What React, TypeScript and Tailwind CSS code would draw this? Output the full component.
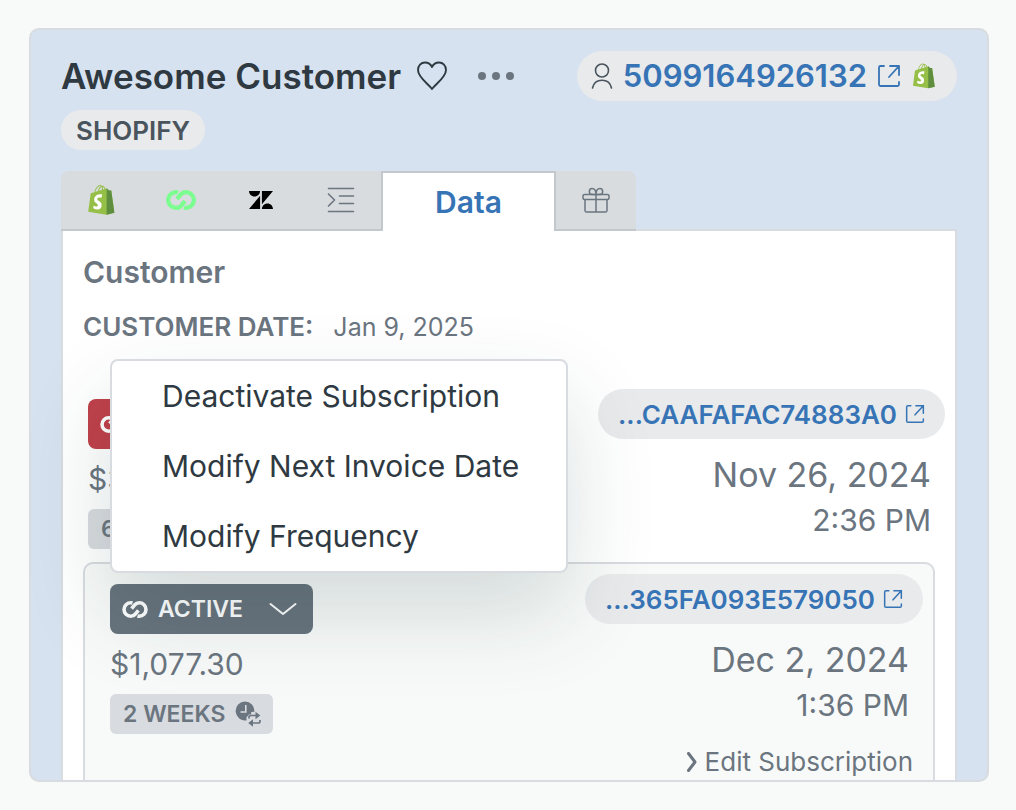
import type { ReactNode } from "react";
import { SiZendesk } from "react-icons/si";

interface IconProps {
  className?: string;
}

function ShopifyIcon({ className }: IconProps) {
  return (
    <svg viewBox="0 0 110 125" className={className} aria-hidden="true">
      <path
        fill="#95bf47"
        d="M95.9,23.9c-0.1-0.6-0.6-1-1.1-1c-0.5,0-9.3-0.2-9.3-0.2s-7.4-7.2-8.1-7.9c-0.7-0.7-2.2-0.5-2.7-0.3c0,0-1.4,0.4-3.7,1.1c-0.4-1.3-1-2.8-1.8-4.4c-2.6-5-6.5-7.7-11.1-7.7c-0.3,0-0.6,0-1,0.1c-0.1-0.2-0.3-0.3-0.4-0.5c-2-2.2-4.6-3.2-7.7-3.1c-6,0.2-12,4.5-16.8,12.2c-3.4,5.4-6,12.2-6.7,17.5c-6.9,2.1-11.7,3.6-11.8,3.7c-3.5,1.1-3.6,1.2-4,4.5c-0.3,2.5-9.5,73.2-9.5,73.2l75.6,13.1l32.8-8.1C109.6,115.8,96,24.5,95.9,23.9z M67.2,16.8c-1.7,0.5-3.7,1.1-5.9,1.8c0-3-0.4-7.3-1.8-10.9C64,8.6,66.2,13.7,67.2,16.8z M57.2,19.9c-4,1.2-8.4,2.6-12.8,3.9c1.2-4.7,3.6-9.4,6.4-12.5c1.1-1.1,2.6-2.4,4.3-3.2C56.9,11.6,57.3,16.5,57.2,19.9z M49.1,4c1.4,0,2.6,0.3,3.6,0.9c-1.6,0.8-3.2,2.1-4.7,3.6c-3.8,4.1-6.7,10.5-7.9,16.6c-3.6,1.1-7.2,2.2-10.5,3.2C31.7,18.8,39.8,4.3,49.1,4z"
      />
      <path
        fill="#5e8e3e"
        d="M94.8,22.9c-0.5,0-9.3-0.2-9.3-0.2s-7.4-7.2-8.1-7.9c-0.3-0.3-0.6-0.4-1-0.5l0,109.7l32.8-8.1c0,0-13.4-90.9-13.5-91.5C95.8,23.3,95.3,22.9,94.8,22.9z"
      />
      <path
        fill="#fff"
        d="M58,39.9l-3.8,14.3c0,0-4.3-2-9.4-1.6c-7.5,0.5-7.5,5.2-7.5,6.4c0.4,6.4,17.3,7.8,18.3,22.9c0.7,11.9-6.3,20-16.4,20.6c-12.2,0.8-18.9-6.4-18.9-6.4l2.6-11c0,0,6.7,5.1,12.1,4.7c3.5-0.2,4.8-3.1,4.7-5.1c-0.5-8.4-14.3-7.9-15.2-21.7C23.8,51.4,31.5,40.1,48.5,39C55,38.6,58,39.9,58,39.9z"
      />
    </svg>
  );
}

function LoopIcon({ className }: IconProps) {
  return (
    <svg
      viewBox="0 0 30 20"
      fill="none"
      stroke="currentColor"
      strokeWidth="4.2"
      className={className}
      aria-hidden="true"
    >
      <path d="M12 2.3C11.400 2.100 10.700 2.100 10 2.100a7.900 7.900 0 0 0 0 15.800c2.500 0 4-.8 5.500-2.600L19 11" />
      <path d="M18 17.700C18.600 17.900 19.300 17.900 20 17.900a7.900 7.900 0 0 0 0-15.800c-2.500 0-4 .8-5.500 2.600L11 9" />
    </svg>
  );
}

function ExternalIcon({ className }: IconProps) {
  return (
    <svg
      viewBox="0 0 24 24"
      fill="none"
      stroke="currentColor"
      strokeWidth="1.8"
      strokeLinecap="round"
      strokeLinejoin="round"
      className={className}
      aria-hidden="true"
    >
      <path d="M7 2H3.5A1.5 1.5 0 0 0 2 3.5v17A1.5 1.5 0 0 0 3.500 22h17a1.5 1.5 0 0 0 1.500-1.500V18M13 2h9v9M22 2 12 13" />
    </svg>
  );
}

function PersonIcon({ className }: IconProps) {
  return (
    <svg
      viewBox="0 0 22 26"
      fill="none"
      stroke="currentColor"
      strokeWidth="1.6"
      strokeLinecap="round"
      className={className}
      aria-hidden="true"
    >
      <circle cx="11" cy="7.5" r="6.5" />
      <path d="M1.5 25c1-4.800 4.500-7.800 9.500-7.800s8.500 3 9.500 7.800" />
    </svg>
  );
}

function HeartIcon({ className }: IconProps) {
  return (
    <svg
      viewBox="0 0 32 30"
      fill="none"
      stroke="currentColor"
      strokeWidth="1.9"
      strokeLinejoin="round"
      className={className}
      aria-hidden="true"
    >
      <path d="M16 28C12.500 23 2 16.500 2 9c0-4.500 3-7.500 7-7.500 3.500 0 5.800 2 7 4.500 1.200-2.500 3.500-4.500 7-4.500 4 0 7 3 7 7.500 0 7.500-10.500 14-14 19z" />
    </svg>
  );
}

function IndentIcon({ className }: IconProps) {
  return (
    <svg
      viewBox="0 0 28 26"
      fill="none"
      stroke="currentColor"
      strokeWidth="1.6"
      strokeLinecap="round"
      strokeLinejoin="round"
      className={className}
      aria-hidden="true"
    >
      <path d="M1.5 1.500h25M12.500 9h14M12.500 16.500h14M1.500 24.500h25M1.500 7l6 6-6 6" />
    </svg>
  );
}

function GiftIcon({ className }: IconProps) {
  return (
    <svg
      viewBox="0 0 28 26"
      fill="none"
      stroke="currentColor"
      strokeWidth="1.5"
      strokeLinejoin="round"
      className={className}
      aria-hidden="true"
    >
      <rect x="1" y="7.5" width="26" height="5" rx="1.5" />
      <path d="M3 12.500V23.500a1.500 1.500 0 0 0 1.500 1.500h19a1.500 1.500 0 0 0 1.500-1.500V12.500M14 7.500V25M14 7.500H10C6.500 7.500 6.500 1.500 10 1.500c2.500 0 4 2.500 4 6zM14 7.500H18c3.500 0 3.500-6 0-6-2.500 0-4 2.500-4 6z" />
    </svg>
  );
}

function FrequencyIcon({ className }: IconProps) {
  return (
    <svg viewBox="0 0 26 26" fill="none" className={className} aria-hidden="true">
      <path
        fill="currentColor"
        d="M10 .5a9.500 9.500 0 1 0 1.500 18.900v-3.200l2.500-2.700h2l.3-2.500 3.100-.3A9.500 9.500 0 0 0 10 .5z"
      />
      <path stroke="#d8dbdf" strokeWidth="1.6" d="M10.800 4v7H5.500" />
      <g stroke="currentColor" strokeWidth="1.7">
        <path d="M14 17.500v-1.300c0-1 .8-1.700 1.700-1.700h6M25 19v1.300c0 1-.8 1.700-1.700 1.700h-6" />
      </g>
      <path fill="currentColor" d="M20.500 10.800l4.800 3.700-4.800 3.700zM18 18.300v7.400L13.200 22z" />
    </svg>
  );
}

function ChevronDown({ className }: IconProps) {
  return (
    <svg
      viewBox="0 0 28 14"
      fill="none"
      stroke="currentColor"
      strokeWidth="2"
      strokeLinecap="round"
      strokeLinejoin="round"
      className={className}
      aria-hidden="true"
    >
      <path d="M1.5 2 14 12 26.500 2" />
    </svg>
  );
}

interface TabProps {
  label: string;
  children: ReactNode;
}

function Tab({ label, children }: TabProps) {
  return (
    <button
      type="button"
      role="tab"
      aria-selected="false"
      aria-label={label}
      className="flex w-20 items-center justify-center text-[#6b757f]"
    >
      {children}
    </button>
  );
}

function IdLink({ id }: { id: string }) {
  return (
    <a
      href="#subscription"
      className="flex h-[50px] items-center gap-2 rounded-full bg-[#e9eaec] px-5 text-[26px] font-semibold text-[#3774b5]"
    >
      {id}
      <ExternalIcon className="size-5" />
    </a>
  );
}

interface SubscriptionProps {
  id: string;
  date: string;
  time: string;
  status: ReactNode;
  price: string;
  frequency: string;
}

function Subscription({ id, date, time, status, price, frequency }: SubscriptionProps) {
  return (
    <div className="flex justify-between">
      <div className="flex flex-col items-start pt-[10px]">
        {status}
        <div className="flex h-[60px] items-center text-[30px]">{price}</div>
        <div className="flex h-10 items-center gap-[10px] rounded-md bg-[#d8dbdf] pr-3 pl-[13px] text-[23px] font-semibold">
          {frequency}
          <FrequencyIcon className="size-[26px]" />
        </div>
      </div>
      <div className="flex flex-col items-end">
        <IdLink id={id} />
        <div className="mt-3 pr-[14px] text-right">
          <div className="text-[34px] leading-[48px]">{date}</div>
          <div className="text-[30px] leading-[42px]">{time}</div>
        </div>
      </div>
    </div>
  );
}

const menuItems = [
  "Deactivate Subscription",
  "Modify Next Invoice Date",
  "Modify Frequency",
];

export default function App() {
  return (
    <div className="flex h-screen bg-[#f8faf9] py-[28px] pr-[27px] pl-[29px] font-[Inter,sans-serif] text-[#6b757f]">
      <main className="flex flex-1 flex-col overflow-hidden rounded-[10px] border-2 border-[#d8dbdf] bg-[#d7e2f0] px-[30px] pt-[21px]">
        <header className="flex items-start justify-between">
          <div>
            <div className="flex h-[50px] items-center">
              <h1 className="text-[35px] font-semibold text-[#2f3941]">Awesome Customer</h1>
              <button type="button" aria-label="Favorite" className="ml-[15px] text-[#2f3941]">
                <HeartIcon className="h-[30px] w-8" />
              </button>
              <button type="button" aria-label="More" className="ml-[30px] flex gap-[6px]">
                <span className="size-2 rounded-full bg-[#6b757f]" />
                <span className="size-2 rounded-full bg-[#6b757f]" />
                <span className="size-2 rounded-full bg-[#6b757f]" />
              </button>
            </div>
            <span className="mt-[9px] flex h-10 w-fit items-center rounded-full bg-[#e9eaec] px-[15px] text-[26px] font-semibold text-[#49545c]">
              SHOPIFY
            </span>
          </div>
          <a
            href="#customer"
            className="flex h-[50px] items-center rounded-full bg-[#e9eaec] pr-[22px] pl-[14px] text-[31px] font-semibold text-[#3774b5]"
          >
            <PersonIcon className="mr-[10px] h-[26px] w-[22px] text-[#49545c]" />
            5099164926132
            <ExternalIcon className="mr-3 ml-[10px] size-6" />
            <ShopifyIcon className="h-[26px] w-[22px]" />
          </a>
        </header>

        <div role="tablist" className="relative z-10 mt-[21px] -mb-[2px] flex h-[60px] shrink-0">
          <div className="flex rounded-tl-lg border-b-2 border-[#c2c8cc] bg-[#d8dcde]">
            <Tab label="Shopify">
              <ShopifyIcon className="h-[30px] w-[27px]" />
            </Tab>
            <Tab label="Loop">
              <LoopIcon className="h-5 w-[30px] text-[#7bfd8f]" />
            </Tab>
            <Tab label="Zendesk">
              <SiZendesk className="size-6 text-black" />
            </Tab>
            <Tab label="Timeline">
              <IndentIcon className="h-[26px] w-7" />
            </Tab>
          </div>
          <button
            type="button"
            role="tab"
            aria-selected="true"
            className="w-[175px] border-x-2 border-t-2 border-[#c2c8cc] bg-white text-[30px] font-semibold text-[#3774b5]"
          >
            Data
          </button>
          <div className="flex rounded-tr-lg border-b-2 border-[#c2c8cc] bg-[#d8dcde]">
            <Tab label="Gifts">
              <GiftIcon className="h-[26px] w-7" />
            </Tab>
          </div>
        </div>

        <section className="relative min-h-0 flex-1 border-2 border-b-0 border-[#d8dbdf] bg-white px-5 pt-5">
          <h2 className="text-[30px] leading-[42px] font-semibold">Customer</h2>
          <p className="mt-[15px] flex items-baseline gap-5 text-[25px] leading-[38px]">
            <span className="text-[26px] font-semibold">CUSTOMER DATE:</span>
            <span>Jan 9, 2025</span>
          </p>

          <div className="relative mt-[43px]">
            <div className="-mr-[10px] pl-[5px]">
              <Subscription
                id="...CAAFAFAC74883A0"
                date="Nov 26, 2024"
                time="2:36 PM"
                price="$3,077.30"
                frequency="6 WEEKS"
                status={
                  <span className="flex h-[50px] items-center gap-[10px] rounded-lg bg-[#c0404a] px-3 text-[23px] font-semibold text-white">
                    <LoopIcon className="h-[17px] w-[26px]" />
                    CANCELLED
                  </span>
                }
              />
            </div>

            <div className="mt-[13px] h-[300px] rounded-t-[10px] border-2 border-[#d8dbdf] bg-[#f8faf9] pt-[10px] pr-[10px] pl-[25px]">
              <Subscription
                id="...365FA093E579050"
                date="Dec 2, 2024"
                time="1:36 PM"
                price="$1,077.30"
                frequency="2 WEEKS"
                status={
                  <button
                    type="button"
                    aria-expanded="true"
                    className="flex h-[50px] items-center rounded-lg bg-[#68737d] pr-4 pl-3 text-[23px] font-semibold text-white"
                  >
                    <LoopIcon className="mr-[10px] h-[17px] w-[26px]" />
                    ACTIVE
                    <ChevronDown className="ml-[26px] h-[14px] w-7" />
                  </button>
                }
              />
              <div className="mt-[10px] flex justify-end pr-[10px]">
                <a href="#edit" className="flex items-center gap-2 text-[26px] leading-[36px]">
                  <svg viewBox="0 0 10 20" className="h-5 w-[10px]" fill="none" aria-hidden="true">
                    <path
                      d="M1.5 1.500 8 10l-6.500 8.500"
                      stroke="currentColor"
                      strokeWidth="3"
                      strokeLinecap="round"
                      strokeLinejoin="round"
                    />
                  </svg>
                  Edit Subscription
                </a>
              </div>
            </div>

            <div
              role="menu"
              className="absolute -top-[30px] left-[27px] w-[458px] rounded-lg border-2 border-[#d8dbdf] bg-white shadow-[0_40px_88px_rgba(23,60,64,0.16)]"
            >
              {menuItems.map((item) => (
                <button
                  key={item}
                  type="button"
                  role="menuitem"
                  className="block h-[70px] w-full pl-[50px] text-left text-[30px] text-[#2f3941]"
                >
                  {item}
                </button>
              ))}
            </div>
          </div>
        </section>
      </main>
    </div>
  );
}
